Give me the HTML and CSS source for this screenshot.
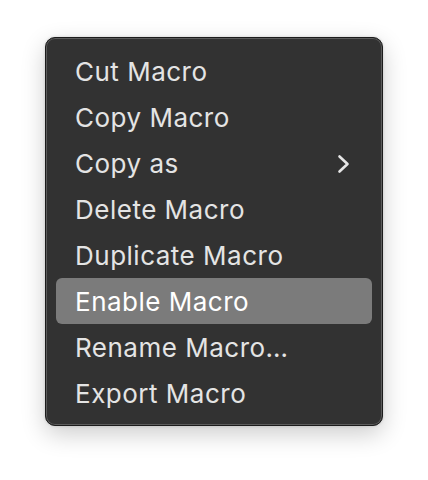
FILE: index.html
```html
<!DOCTYPE html>
<html>
<head>
<meta charset="utf-8">
<link rel="stylesheet" href="styles.css">
</head>
<body>
<div class="menu">
  <div class="item">Cut Macro</div>
  <div class="item">Copy Macro</div>
  <div class="item sub"><span>Copy as</span>
    <svg class="chev" width="14" height="20" viewBox="0 0 14 20"><path d="M2.5 2.5 L10.5 10 L2.5 17.5" fill="none" stroke="#e6e6e6" stroke-width="2.6" stroke-linecap="round" stroke-linejoin="round"/></svg>
  </div>
  <div class="item">Delete Macro</div>
  <div class="item">Duplicate Macro</div>
  <div class="item active">Enable Macro</div>
  <div class="item">Rename Macro…</div>
  <div class="item">Export Macro</div>
</div>
</body>
</html>
```
FILE: styles.css
```css
html, body {
  margin: 0;
  padding: 0;
  background: #ffffff;
}
body {
  box-sizing: border-box;
  min-height: 480px;
  padding: 37px 0 0 45px;
  font-family: Inter, "Liberation Sans", Arial, sans-serif;
}
.menu {
  box-sizing: border-box;
  width: 338px;
  height: 389px;
  background: #323232;
  border-radius: 10px;
  border: 1px solid #1c1c1c;
  box-shadow: inset 0 0 0 1px #5c5c5c, 0 8px 24px rgba(0,0,0,0.2), 0 0 3px rgba(0,0,0,0.15);
  padding: 11px 10px 9px 10px;
  display: flex;
  flex-direction: column;
}
.item {
  height: 46px;
  display: flex;
  align-items: center;
  justify-content: space-between;
  padding: 0 20px 0 19px;
  font-size: 26px;
  color: #e4e4e4;
  border-radius: 6px;
  letter-spacing: 0.5px;
}
.item.active {
  background: #7b7b7b;
  color: #ffffff;
}
.chev {
  display: block;
  margin-right: 1px;
}
```
